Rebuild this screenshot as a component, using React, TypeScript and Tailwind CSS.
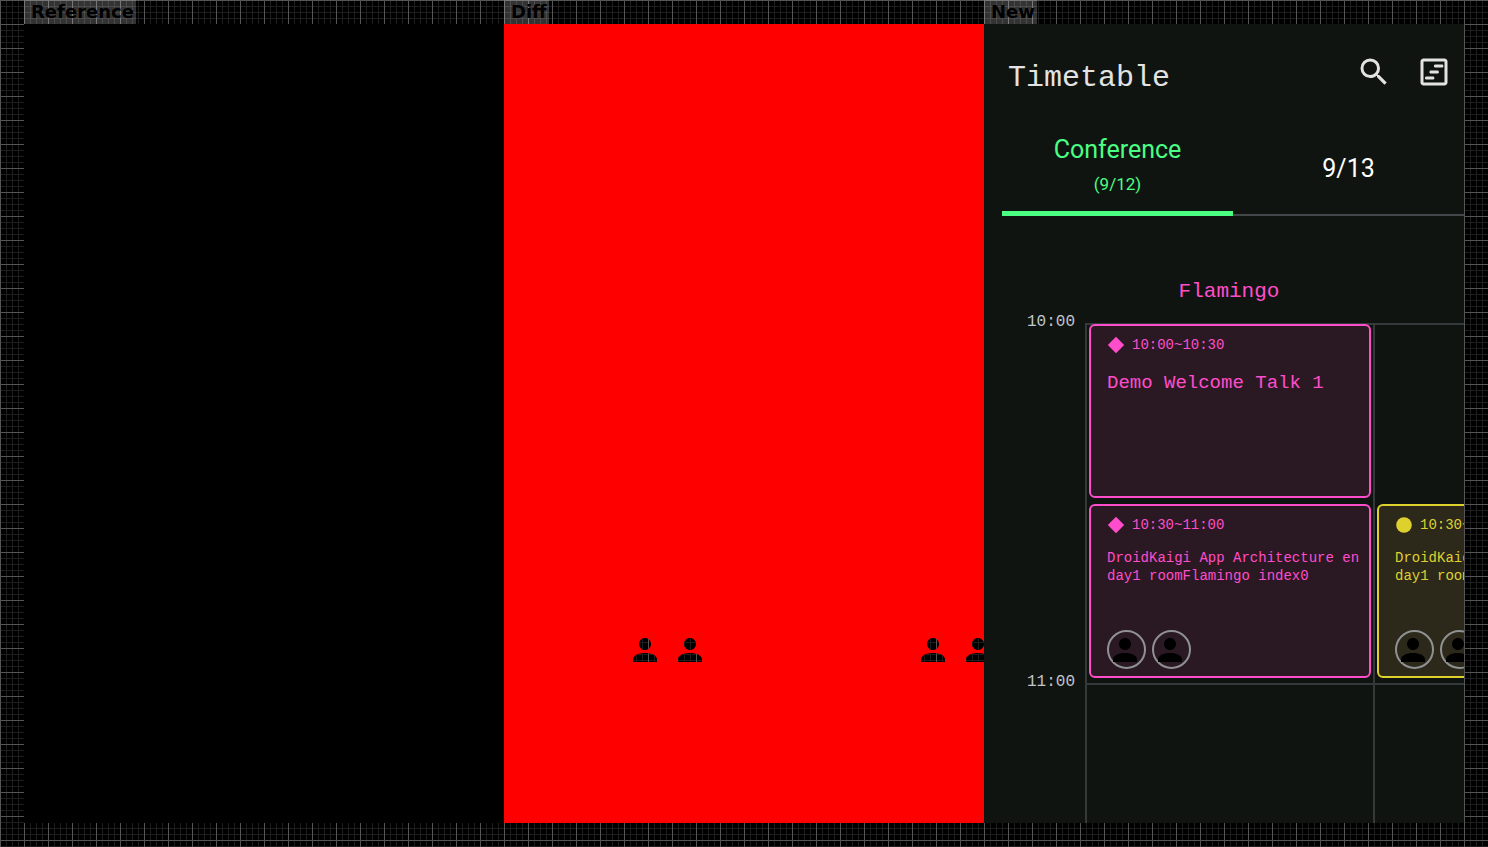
import type { ReactNode } from "react";

const PERSON =
  "M12 12c2.21 0 4-1.79 4-4s-1.79-4-4-4-4 1.79-4 4 1.79 4 4 4zM12 14c-4.4 0-8 1.8-8 4.2V20h16v-1.8c0-2.4-3.6-4.2-8-4.2z";

function Panel({ label, className, children }: { label: string; className: string; children?: ReactNode }) {
  return (
    <section className="flex min-w-0 flex-1 flex-col">
      <h2 className="h-6 self-start bg-white/20 pl-[7px] pr-0.5 text-lg leading-6 font-bold text-black [font-family:'DejaVu_Sans',sans-serif]">
        {label}
      </h2>
      <div className={`min-h-[799px] flex-1 overflow-hidden ${className}`}>{children}</div>
    </section>
  );
}

function Cutout({ id, lines, major }: { id: string; lines: number[]; major: number }) {
  return (
    <svg className="block h-6 w-6 shrink-0" viewBox="0 0 24 24" aria-hidden="true" shapeRendering="crispEdges">
      <defs>
        <clipPath id={id}>
          <path transform="translate(-6 -6) scale(1.5)" d={PERSON} />
        </clipPath>
      </defs>
      <g clipPath={`url(#${id})`}>
        <rect width="24" height="24" fill="#000" />
        {[4, 16, 22].map((y) => (
          <rect key={y} y={y} width="24" height="1" fill="#1e1e1e" />
        ))}
        {lines.map((x) => (
          <rect key={x} x={x} width="1" height="24" fill="#1e1e1e" />
        ))}
        <rect x={major} width="1" height="24" fill="#555" />
      </g>
    </svg>
  );
}

function CutoutPair({ id }: { id: string }) {
  return (
    <div className="flex shrink-0 gap-[21px]">
      <Cutout id={`${id}-a`} lines={[3, 9, 21]} major={15} />
      <Cutout id={`${id}-b`} lines={[0, 6, 12]} major={18} />
    </div>
  );
}

function Avatar() {
  return (
    <svg className="block h-[39px] w-[39px] shrink-0" viewBox="0 0 39 39" aria-hidden="true">
      <circle cx="19.5" cy="19.5" r="18.5" fill="none" stroke="#8f9193" strokeWidth="2" />
      <path transform="translate(0 2) scale(1.5)" d={PERSON} fill="#000" />
    </svg>
  );
}

function Session({
  time,
  title,
  shape,
  colors,
  titleClass,
  speakers,
}: {
  time: string;
  title: string;
  shape: "diamond" | "circle";
  colors: string;
  titleClass: string;
  speakers: number;
}) {
  return (
    <article className={`flex h-[174px] shrink-0 flex-col rounded-md border-2 pt-2.5 pb-[7px] pl-4 ${colors}`}>
      <div className="flex h-[18px] items-center gap-[7px]">
        <svg className="h-[18px] w-[18px]" viewBox="0 0 18 18" fill="currentColor" aria-hidden="true">
          {shape === "diamond" ? <path d="M9 .8 17.2 9 9 17.2.8 9z" /> : <circle cx="9" cy="9" r="7.8" />}
        </svg>
        <time className="text-sm leading-[18px]">{time}</time>
      </div>
      <h4 className={titleClass}>{title}</h4>
      <div className="mt-auto flex gap-1.5">
        {Array.from({ length: speakers }, (_, i) => (
          <Avatar key={i} />
        ))}
      </div>
    </article>
  );
}

const PINK = "border-[#ff4dcb] bg-[#2a1922] text-[#ff4dcb]";
const YELLOW = "border-[#ded12e] bg-[#2c291b] text-[#ded12e]";
const SMALL_TITLE = "mt-[15px] text-sm leading-[18px]";
const LARGE_TITLE = "mt-[17px] text-[19px] leading-6";

function Timetable() {
  return (
    <div className="flex h-full flex-col">
      <header className="flex h-24 shrink-0 items-center pr-3 pl-6">
        <h3 className="flex-1 pt-3 text-[30px] leading-9 text-[#e3e3e3]">Timetable</h3>
        <div className="flex gap-6 text-[#e3e3e3]">
          <button type="button" aria-label="Search">
            <svg className="block h-9 w-9" viewBox="0 0 24 24" fill="currentColor" aria-hidden="true">
              <path d="M15.5 14h-.79l-.28-.27A6.471 6.471 0 0 0 16 9.5 6.5 6.5 0 1 0 9.5 16c1.61 0 3.09-.59 4.23-1.57l.27.28v.79l5 4.99L20.49 19l-4.99-5zm-6 0C7.01 14 5 11.99 5 9.5S7.01 5 9.5 5 14 7.01 14 9.5 11.99 14 9.5 14z" />
            </svg>
          </button>
          <button type="button" aria-label="Timeline view">
            <svg className="block h-9 w-9" viewBox="0 0 24 24" fill="currentColor" aria-hidden="true">
              <path d="M19 5v14H5V5h14m0-2H5c-1.1 0-2 .9-2 2v14c0 1.1.9 2 2 2h14c1.1 0 2-.9 2-2V5c0-1.1-.9-2-2-2z" />
              <rect x="12" y="7" width="6.2" height="2" rx=".8" />
              <rect x="9" y="11" width="6.2" height="2" rx=".8" />
              <rect x="6" y="15" width="6.2" height="2" rx=".8" />
            </svg>
          </button>
        </div>
      </header>

      <div role="tablist" className="ml-[18px] flex h-24 shrink-0 [font-family:Roboto,sans-serif]">
        <button
          type="button"
          role="tab"
          aria-selected="true"
          className="flex flex-1 flex-col items-center border-b-[5px] border-[#4aff82] pt-4 text-[#4aff82]"
        >
          <span className="text-[25px] leading-7">Conference</span>
          <span className="mt-2 text-[17px] leading-6">(9/12)</span>
        </button>
        <button
          type="button"
          role="tab"
          aria-selected="false"
          className="flex-1 border-b-2 border-[#444749] pt-1 text-[25px] leading-7 text-white"
        >
          9/13
        </button>
      </div>

      <div className="flex h-[107px] shrink-0 items-end pb-[19px] pl-[101px]">
        <h3 className="w-72 text-center text-[21px] leading-6 text-[#ff4dcb]">Flamingo</h3>
      </div>

      <div className="flex flex-1">
        <div className="-mt-[13px] w-[101px] shrink-0 pr-2.5 text-right text-base leading-6 text-[#c0c6ca]">
          <div className="h-[360px]">10:00</div>
          <div>11:00</div>
        </div>
        <div className="flex min-w-0 flex-1 overflow-hidden bg-[linear-gradient(#333a39_2px,transparent_2px)] bg-[length:100%_360px]">
          <div className="flex w-72 shrink-0 flex-col gap-1.5 border-l-2 border-[#333a39] px-0.5 pt-px">
            <Session
              time="10:00~10:30"
              title="Demo Welcome Talk 1"
              shape="diamond"
              colors={PINK}
              titleClass={LARGE_TITLE}
              speakers={0}
            />
            <Session
              time="10:30~11:00"
              title="DroidKaigi App Architecture en day1 roomFlamingo index0"
              shape="diamond"
              colors={PINK}
              titleClass={SMALL_TITLE}
              speakers={2}
            />
          </div>
          <div className="w-72 shrink-0 border-l-2 border-[#333a39] px-0.5 pt-[181px]">
            <Session
              time="10:30~11:00"
              title="DroidKaigi App Architecture en day1 roomGiraffe index0"
              shape="circle"
              colors={YELLOW}
              titleClass={SMALL_TITLE}
              speakers={2}
            />
          </div>
        </div>
      </div>
    </div>
  );
}

export default function App() {
  return (
    <main className="flex min-h-screen bg-black bg-[linear-gradient(#555_1px,transparent_1px),linear-gradient(90deg,#555_1px,transparent_1px),linear-gradient(#1e1e1e_1px,transparent_1px),linear-gradient(90deg,#1e1e1e_1px,transparent_1px)] bg-[length:24px_24px,24px_24px,6px_6px,6px_6px] px-6 pb-6">
      <Panel label="Reference" className="bg-black" />
      <Panel label="Diff" className="bg-[#ff0000]">
        <div className="flex gap-[219px] pt-[614px] pl-[129px]">
          <CutoutPair id="first" />
          <CutoutPair id="second" />
        </div>
      </Panel>
      <Panel
        label="New"
        className="flex flex-col bg-[#101411] [font-family:'Liberation_Mono',monospace] *:flex-1"
      >
        <Timetable />
      </Panel>
    </main>
  );
}
